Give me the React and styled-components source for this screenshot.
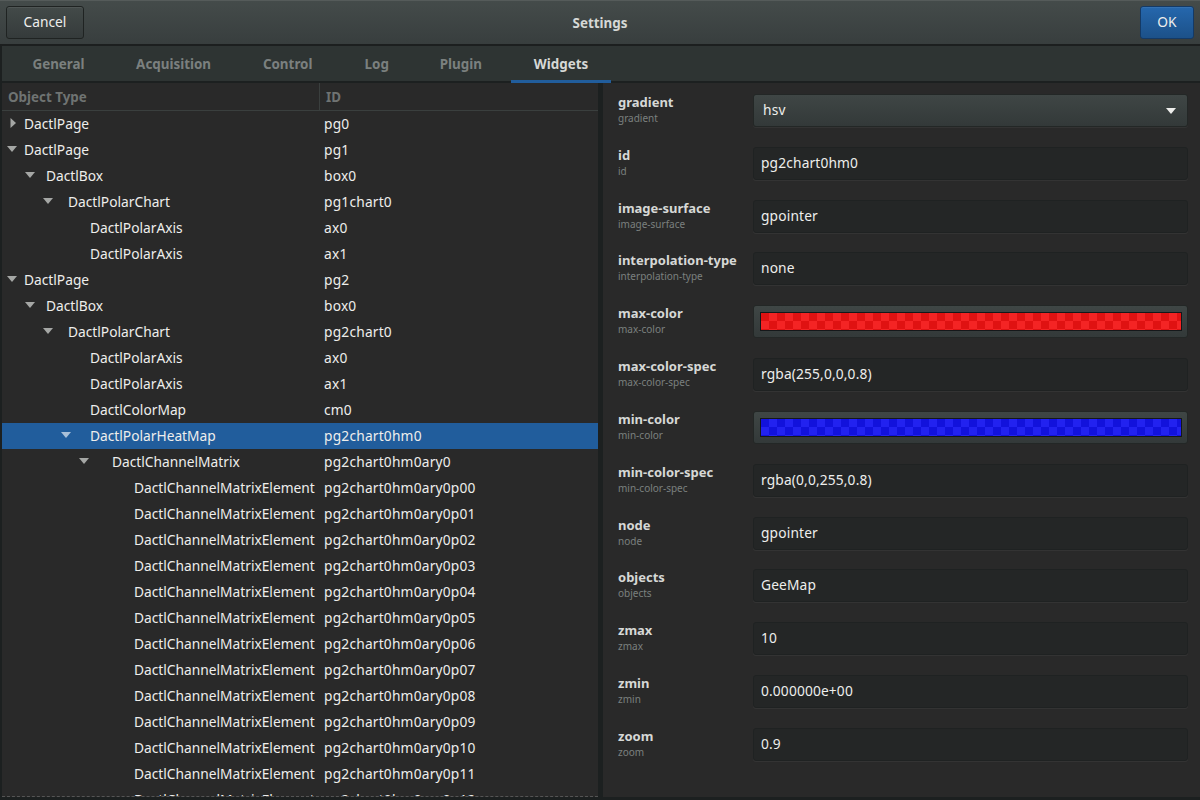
import React from "react";
import styled, { createGlobalStyle } from "styled-components";

const GlobalStyle = createGlobalStyle`
  html, body {
    margin: 0;
    padding: 0;
    background: #1f2222;
    overflow: hidden;
  }
  * {
    box-sizing: border-box;
  }
`;

const Window = styled.div`
  width: 1200px;
  height: 800px;
  display: flex;
  flex-direction: column;
  background: #1c2020;
  color: #eeeeec;
  font-family: "Noto Sans", "Open Sans", sans-serif;
  font-size: 13.75px;
  overflow: hidden;
`;

const HeaderBar = styled.header`
  height: 46px;
  flex: none;
  display: grid;
  grid-template-columns: 1fr auto 1fr;
  align-items: center;
  padding: 0 6px;
  background: linear-gradient(#444b4a, #383e3e);
  border-top: 1px solid #555b5a;
  border-bottom: 2px solid #1c1f1f;
`;

const Title = styled.div`
  font-size: 13.4px;
  font-weight: 700;
  color: #d6d8d6;
`;

const Button = styled.button`
  height: 33px;
  margin-top: -1px;
  width: ${(p) => p.$width}px;
  justify-self: ${(p) => (p.$primary ? "end" : "start")};
  border-radius: 3px;
  padding: 0 0 2px;
  font: inherit;
  color: #eeeeec;
  border: 1px solid ${(p) => (p.$primary ? "#143a66" : "#1f2322")};
  background: ${(p) =>
    p.$primary ? "linear-gradient(#2567ad, #1c5189)" : "linear-gradient(#434a49, #353b3b)"};
  box-shadow: inset 0 1px 0 rgba(255, 255, 255, 0.07);
`;

const TabBar = styled.nav`
  height: 37px;
  flex: none;
  display: flex;
  gap: 7.6px;
  margin-left: 2px;
  padding-left: 8px;
  background: #2e3433;
  border-bottom: 2px solid #1c2020;
`;

const Tab = styled.div`
  width: ${(p) => p.$width}px;
  display: flex;
  align-items: center;
  justify-content: center;
  padding-top: 2px;
  font-size: 13.4px;
  font-weight: 700;
  color: ${(p) => (p.$active ? "#d6d8d6" : "#7b807f")};
  border-bottom: 3px solid ${(p) => (p.$active ? "#215d9c" : "transparent")};
  margin-bottom: -2px;
`;

const Body = styled.main`
  flex: 1;
  min-height: 0;
  display: flex;
  padding-left: 2px;
  gap: 5px;
`;

const TreePanel = styled.section`
  width: 596px;
  flex: none;
  background: #292929;
  display: flex;
  flex-direction: column;
  height: 714px;
  border-bottom: 1px dashed #555;
  overflow: hidden;
`;

const ColumnHeader = styled.div`
  height: 28px;
  flex: none;
  display: grid;
  grid-template-columns: 317px 1fr;
  align-items: center;
  font-size: 13.4px;
  font-weight: 700;
  color: #6f7372;
  border-bottom: 1px solid #3a3f3e;
`;

const ColumnTitle = styled.div`
  height: 100%;
  display: flex;
  align-items: center;
  padding-left: ${(p) => p.$pad}px;
  border-left: ${(p) => (p.$divider ? "1px solid #3a3f3e" : "none")};
`;

const Row = styled.div`
  height: 26px;
  flex: none;
  display: grid;
  grid-template-columns: 318px 1fr;
  align-items: center;
  padding-bottom: 2px;
  background: ${(p) => (p.$selected ? "#215d9c" : "transparent")};
`;

const NameCell = styled.div`
  display: flex;
  align-items: center;
  padding-left: ${(p) => 5 + p.$depth * 18}px;
  white-space: nowrap;
`;

const Expander = styled.svg`
  width: 10px;
  height: 10px;
  flex: none;
  fill: ${(p) => (p.$selected ? "#a9c0d9" : "#a5a7a5")};
  visibility: ${(p) => (p.$hidden ? "hidden" : "visible")};
`;

const NameText = styled.span`
  margin-left: ${(p) => 7 + p.$depth * 4}px;
`;

const IdCell = styled.div`
  padding-left: 4px;
  letter-spacing: 0.2px;
  white-space: nowrap;
`;

const FormPanel = styled.section`
  flex: 1;
  background: #292929;
  margin-bottom: 3px;
  padding: 11px 12px 0 15px;
`;

const Field = styled.div`
  height: 52.83px;
  display: grid;
  grid-template-columns: 135px 1fr;
  align-items: start;
`;

const LabelBlock = styled.div`
  display: flex;
  flex-direction: column;
`;

const Label = styled.div`
  font-size: 13px;
  font-weight: 700;
  line-height: 17px;
  color: #d6d8d6;
`;

const SubLabel = styled.div`
  font-size: 10px;
  line-height: 14px;
  color: #7b807f;
`;

const Entry = styled.div`
  height: 33px;
  display: flex;
  align-items: center;
  padding: 0 0 2px 7px;
  letter-spacing: 0.15px;
  background: #242626;
  border: 1px solid #1f2222;
  border-radius: 3px;
  box-shadow: 0 1px 0 rgba(255, 255, 255, 0.05);
`;

const Select = styled(Entry)`
  justify-content: space-between;
  padding: 0 11px 2px 9px;
  border-color: #232726;
  background: linear-gradient(#3f4645, #333939);
`;

const Caret = styled.svg`
  width: 10px;
  height: 6px;
  margin-top: 2px;
  fill: #eeeeec;
`;

const ColorButton = styled.div`
  height: 33px;
  padding: 6px 5px 6px 6px;
  border: 1px solid #232726;
  border-radius: 3px;
  background: linear-gradient(#3f4645, #333939);
`;

const Swatch = styled.div`
  height: 100%;
  border: 1px solid #15181a;
  background-color: ${(p) => p.$dark};
  background-image:
    linear-gradient(45deg, ${(p) => p.$light} 25%, transparent 25%, transparent 75%, ${(p) => p.$light} 75%),
    linear-gradient(45deg, ${(p) => p.$light} 25%, transparent 25%, transparent 75%, ${(p) => p.$light} 75%);
  background-size: 16px 16px;
  background-position: 0 0, 8px 8px;
`;

const treeRows = [
  { name: "DactlPage", id: "pg0", depth: 0, arrow: "right" },
  { name: "DactlPage", id: "pg1", depth: 0, arrow: "down" },
  { name: "DactlBox", id: "box0", depth: 1, arrow: "down" },
  { name: "DactlPolarChart", id: "pg1chart0", depth: 2, arrow: "down" },
  { name: "DactlPolarAxis", id: "ax0", depth: 3 },
  { name: "DactlPolarAxis", id: "ax1", depth: 3 },
  { name: "DactlPage", id: "pg2", depth: 0, arrow: "down" },
  { name: "DactlBox", id: "box0", depth: 1, arrow: "down" },
  { name: "DactlPolarChart", id: "pg2chart0", depth: 2, arrow: "down" },
  { name: "DactlPolarAxis", id: "ax0", depth: 3 },
  { name: "DactlPolarAxis", id: "ax1", depth: 3 },
  { name: "DactlColorMap", id: "cm0", depth: 3 },
  { name: "DactlPolarHeatMap", id: "pg2chart0hm0", depth: 3, arrow: "down", selected: true },
  { name: "DactlChannelMatrix", id: "pg2chart0hm0ary0", depth: 4, arrow: "down" },
  ...["00", "01", "02", "03", "04", "05", "06", "07", "08", "09", "10", "11", "12"].map((n) => ({
    name: "DactlChannelMatrixElement",
    id: `pg2chart0hm0ary0p${n}`,
    depth: 5,
  })),
];

const fields = [
  { name: "gradient", kind: "select", value: "hsv" },
  { name: "id", value: "pg2chart0hm0" },
  { name: "image-surface", value: "gpointer" },
  { name: "interpolation-type", value: "none" },
  { name: "max-color", kind: "color", light: "#f42424", dark: "#e01212" },
  { name: "max-color-spec", value: "rgba(255,0,0,0.8)" },
  { name: "min-color", kind: "color", light: "#2222f0", dark: "#1212dc" },
  { name: "min-color-spec", value: "rgba(0,0,255,0.8)" },
  { name: "node", value: "gpointer" },
  { name: "objects", value: "GeeMap" },
  { name: "zmax", value: "10" },
  { name: "zmin", value: "0.000000e+00" },
  { name: "zoom", value: "0.9" },
];

const tabs = [
  { label: "General", width: 97 },
  { label: "Acquisition", width: 118 },
  { label: "Control", width: 95 },
  { label: "Log", width: 68 },
  { label: "Plugin", width: 85 },
  { label: "Widgets", width: 100, active: true },
];

const Arrow = ({ direction, selected }) => (
  <Expander viewBox="0 0 10 10" $hidden={!direction} $selected={selected}>
    <path d={direction === "right" ? "M3.5 0l5.5 5-5.5 5z" : "M0 2h10L5 8z"} />
  </Expander>
);

const FieldControl = ({ field }) => {
  if (field.kind === "select") {
    return (
      <Select>
        {field.value}
        <Caret viewBox="0 0 10 6">
          <path d="M0 0h10L5 6z" />
        </Caret>
      </Select>
    );
  }
  if (field.kind === "color") {
    return (
      <ColorButton>
        <Swatch $light={field.light} $dark={field.dark} />
      </ColorButton>
    );
  }
  return <Entry>{field.value}</Entry>;
};

export default function App() {
  return (
    <>
      <GlobalStyle />
      <Window>
        <HeaderBar>
          <Button $width={78}>Cancel</Button>
          <Title>Settings</Title>
          <Button $width={54} $primary>
            OK
          </Button>
        </HeaderBar>
        <TabBar>
          {tabs.map((tab) => (
            <Tab key={tab.label} $width={tab.width} $active={tab.active}>
              {tab.label}
            </Tab>
          ))}
        </TabBar>
        <Body>
          <TreePanel>
            <ColumnHeader>
              <ColumnTitle $pad={6}>Object Type</ColumnTitle>
              <ColumnTitle $pad={6} $divider>
                ID
              </ColumnTitle>
            </ColumnHeader>
            {treeRows.map((row) => (
              <Row key={row.name + row.id + row.depth} $selected={row.selected}>
                <NameCell $depth={row.depth}>
                  <Arrow direction={row.arrow} selected={row.selected} />
                  <NameText $depth={row.depth}>{row.name}</NameText>
                </NameCell>
                <IdCell>{row.id}</IdCell>
              </Row>
            ))}
          </TreePanel>
          <FormPanel>
            {fields.map((field) => (
              <Field key={field.name}>
                <LabelBlock>
                  <Label>{field.name}</Label>
                  <SubLabel>{field.name}</SubLabel>
                </LabelBlock>
                <FieldControl field={field} />
              </Field>
            ))}
          </FormPanel>
        </Body>
      </Window>
    </>
  );
}
